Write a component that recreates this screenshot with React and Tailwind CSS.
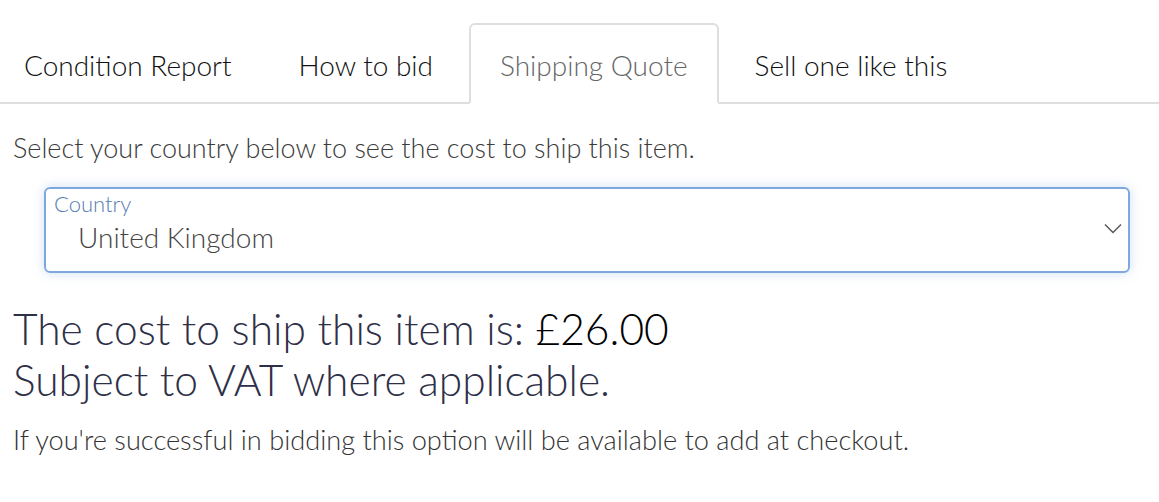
import { useState } from 'react'

const tabs = ['Condition Report', 'How to bid', 'Shipping Quote', 'Sell one like this']

export default function App() {
  const [active, setActive] = useState(2)

  return (
    <div className="min-h-screen bg-white font-light font-['Lato','Noto_Sans',sans-serif]">
      <div className="flex gap-[5px] border-b-2 border-[#dedede] pt-[23px]">
        {tabs.map((t, i) => (
          <button
            key={t}
            onClick={() => setActive(i)}
            className={
              (i === 0 ? 'pl-[22px] ' : 'pl-[29px] ') +
              'pr-[29px] h-[81px] pt-[2px] -mb-[2px] text-[28px] rounded-t-md border-2 ' +
              (i === active
                ? 'border-[#dedede] border-b-white bg-white text-[#666]'
                : 'border-transparent text-[#111]')
            }
          >
            {t}
          </button>
        ))}
      </div>

      <div className="px-[13px]">
        <p className="mt-[27px] text-[27px] leading-[34px] text-[#3b3b3b]">
          Select your country below to see the cost to ship this item.
        </p>

        <div className="ml-[31px] mr-[16px] mt-[22px] relative h-[86px] rounded-md border-2 border-[#7ea8dd] shadow-[0_0_12px_rgba(120,165,225,0.35)]">
          <div className="pl-2 pt-[2px] text-[22px] leading-[26px] text-[#5580b3]">Country</div>
          <div className="pl-[32px] text-[28px] leading-[40px] text-[#444]">United Kingdom</div>
          <svg
            className="absolute right-[6px] top-[33px]"
            width="18"
            height="12"
            viewBox="0 0 18 12"
            fill="none"
            stroke="#555"
            strokeWidth="1.4"
          >
            <path d="M1 2.5l8 8 8-8" />
          </svg>
        </div>

        <div className="mt-[30px] text-[42.5px] leading-[51px] text-[#2e3047]">
          <div>
            The cost to ship this item is: <span className="text-black">£26.00</span>
          </div>
          <div>Subject to VAT where applicable.</div>
        </div>

        <p className="mt-[18px] text-[27.2px] leading-[34px] text-[#333]">
          If you're successful in bidding this option will be available to add at checkout.
        </p>
      </div>
    </div>
  )
}
